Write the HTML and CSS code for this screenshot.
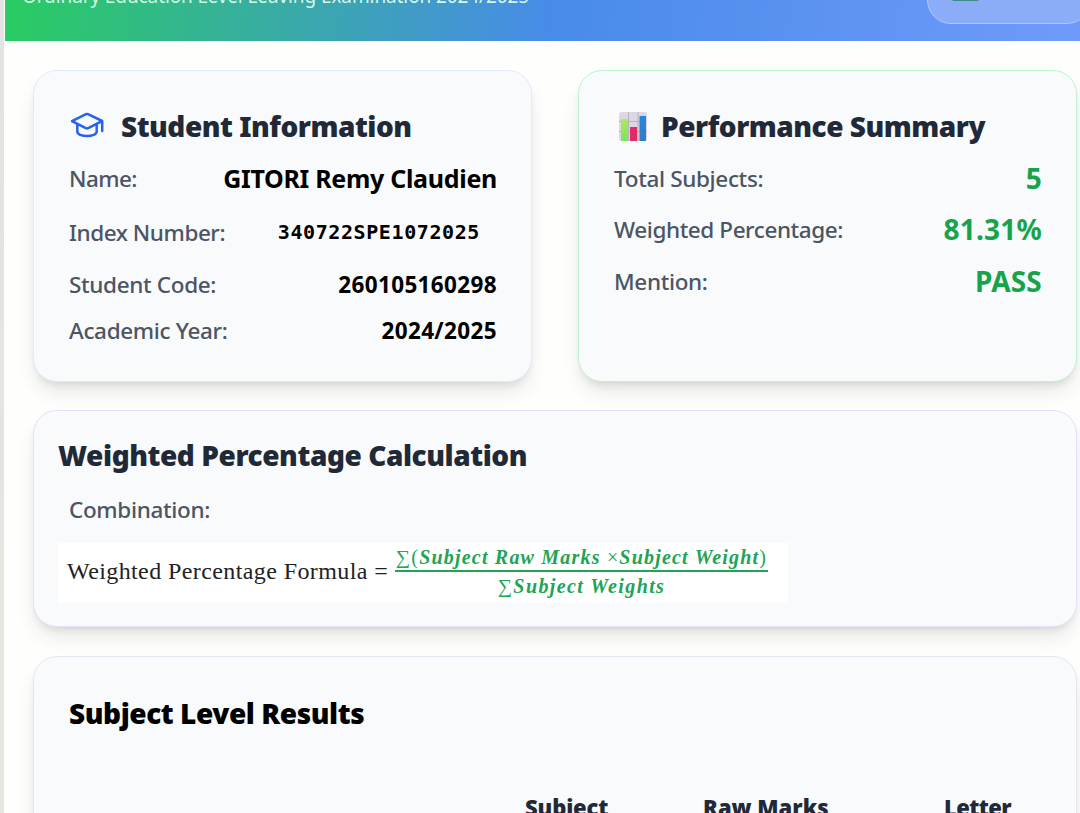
FILE: index.html
```html
<!DOCTYPE html>
<html lang="en">
<head>
<meta charset="utf-8">
<title>Examination Results</title>
<link rel="stylesheet" href="styles.css">
</head>
<body>
<div class="page">
  <header class="banner">
    <p class="subtitle">Ordinary Education Level Leaving Examination 2024/2025</p>
    <div class="chip"><span class="chip-mark"></span></div>
  </header>
  <main class="content">
    <div class="pair">
      <section class="card info">
        <h2 class="heading with-icon">
          <svg class="cap" viewBox="0 0 34 26" fill="none" stroke="#2563eb" stroke-width="2.5" stroke-linecap="round" stroke-linejoin="round"><path d="M2 9.2 16 2.2Q17 1.8 18 2.2L32.2 9V19M2 9.2 15.8 16.2Q17 16.8 18.2 16.2L32 9.2M7.3 12.5V19.5C7.3 25.5 26.7 25.5 26.7 19.5V12.5"/></svg>
          <span>Student Information</span>
        </h2>
        <div class="row r-name"><span class="label l-name">Name:</span><b class="value v-name">GITORI Remy Claudien</b></div>
        <div class="row r-index"><span class="label l-index">Index Number:</span><b class="value mono">340722SPE1072025</b></div>
        <div class="row r-code"><span class="label">Student Code:</span><b class="value v-code">260105160298</b></div>
        <div class="row r-year"><span class="label">Academic Year:</span><b class="value v-year">2024/2025</b></div>
      </section>
      <section class="card summary">
        <h2 class="heading with-icon">
          <svg class="chart" viewBox="0 0 28 29"><defs><linearGradient id="green" x2="0" y2="1"><stop stop-color="#a9ee55"/><stop offset="1" stop-color="#79e45e"/></linearGradient><linearGradient id="blue" x2="0" y2="1"><stop stop-color="#2688e0"/><stop offset="1" stop-color="#347bc0"/></linearGradient></defs><rect width="28" height="29" rx="3" fill="#dcd7e3"/><path d="M0 9.5H28M0 19.5H28M9.5 0V29M19 0V29" stroke="#b4aebd" stroke-width=".9"/><rect x="2" y="7" width="7" height="22" fill="url(#green)"/><rect x="11" y="15" width="7" height="14" fill="#e02b68"/><rect x="20.5" y="4" width="6.5" height="25" fill="url(#blue)"/></svg>
          <span>Performance Summary</span>
        </h2>
        <div class="row r-total"><span class="label">Total Subjects:</span><b class="value score">5</b></div>
        <div class="row r-percent"><span class="label l-percent">Weighted Percentage:</span><b class="value score">81.31%</b></div>
        <div class="row r-mention"><span class="label">Mention:</span><b class="value score">PASS</b></div>
      </section>
    </div>
    <section class="card calc">
      <h2 class="heading">Weighted Percentage Calculation</h2>
      <p class="label combination">Combination:</p>
      <div class="formula">
        <span class="formula-name">Weighted Percentage Formula =</span>
        <span class="fraction">
          <span class="numerator"><i class="sigma">∑(</i>Subject Raw Marks <i class="sigma">×</i>Subject Weight<i class="sigma">)</i></span>
          <span class="denominator"><i class="sigma">∑</i>Subject Weights</span>
        </span>
      </div>
    </section>
    <section class="card results">
      <h2 class="heading t-results">Subject Level Results</h2>
      <div class="columns"><span></span><span class="c-subject">Subject</span><span>Raw Marks</span><span class="c-letter">Letter</span></div>
    </section>
  </main>
</div>
</body>
</html>
```
FILE: styles.css
```css
* { box-sizing: border-box; }
html, body { margin: 0; height: 813px; overflow: hidden; }
body { background: linear-gradient(#e2e3e3, #e7e6dd); font-family: "Noto Sans", "Open Sans", sans-serif; }
.page { width: 1095px; height: 813px; margin-left: 4px; padding-left: 1px; background: #fefffd; overflow: hidden; }
.banner { height: 41px; display: flex; padding-left: 17px; background: linear-gradient(98deg, #29cc61 0%, #488be9 50%, #719bfc 100%); overflow: hidden; }
.subtitle { margin: -18px 0 0; width: 905px; flex: none; font-size: 19px; line-height: 28px; color: #d3f8e5; white-space: nowrap; letter-spacing: -.1px; }
.chip { flex: none; width: 164px; height: 70px; margin-top: -46px; border: 1px solid #adc8fc; border-radius: 24px; background: #8badf8; padding: 40px 0 0 24px; }
.chip-mark { display: block; width: 27px; height: 6px; border-radius: 2px; background: #3f8b87; }
.content { width: 1044px; margin: 29px 0 0 28px; }
.pair { display: flex; justify-content: space-between; margin-bottom: 28px; }
.card { border: 1px solid #e2ebf8; border-radius: 24px; background: #f9fafc; box-shadow: 0 12px 20px -4px rgba(40,40,25,.12), 0 5px 8px -4px rgba(40,40,25,.13); }
.info, .summary { width: 499px; height: 312px; padding: 32px 34px 0 35px; }
.summary { border-color: #bdf2d2; }
.heading { margin: 0; font-size: 28px; font-weight: 900; line-height: 46px; color: #1f2937; white-space: nowrap; letter-spacing: -.43px; }
.with-icon { display: flex; align-items: center; height: 46px; letter-spacing: -.48px; }
.cap { width: 34px; height: 26px; margin: -2px 17px 0 1px; }
.chart { width: 28px; height: 29px; margin: 0 14px 0 5px; }
.row { display: flex; justify-content: space-between; align-items: center; height: 46px; white-space: nowrap; }
.r-name, .r-total { margin-top: 6px; }
.r-index { margin-top: 8px; }
.r-code { margin-top: 6px; }
.r-percent { margin-top: 5px; }
.r-mention { margin-top: 6px; }
.label { font-size: 22.5px; font-weight: 500; color: #4b5563; letter-spacing: -.34px; }
.l-name { letter-spacing: -.55px; }
.l-index { letter-spacing: -.45px; }
.l-percent { letter-spacing: -.42px; }
.value { font-weight: 700; color: #000; }
.v-name { font-size: 25px; letter-spacing: -.3px; }
.v-code, .v-year { font-size: 22.5px; letter-spacing: .36px; }
.mono { font: bold 20px/30px "DejaVu Sans Mono", monospace; letter-spacing: .6px; margin-right: 17px; }
.score { font-size: 28px; color: #16a34a; letter-spacing: .2px; }
.calc { height: 217px; margin-bottom: 29px; padding: 21px 24px; border-color: #e9defb; }
.combination { margin: 0; padding: 9px 0 0 11px; line-height: 46px; }
.formula { width: 730px; height: 60px; margin-top: 10px; padding-left: 9px; display: flex; background: #fff; font-family: "Liberation Serif", serif; white-space: nowrap; }
.formula-name { width: 328px; font-size: 24px; line-height: 57px; color: #222; letter-spacing: .4px; }
.fraction { width: 373px; color: #20a455; font-size: 20px; font-weight: bold; font-style: italic; text-align: center; }
.numerator, .denominator { display: block; height: 29px; line-height: 29px; letter-spacing: 1.2px; }
.denominator { letter-spacing: 1.4px; }
.numerator { border-bottom: 2px solid #20a455; }
.sigma { font-style: normal; font-weight: normal; }
.results { height: 300px; padding: 33px 35px; border-color: #e5e7f0; }
.t-results { color: #000; }
.columns { display: grid; grid-template-columns: 456px 178px 241px 1fr; margin-top: 55px; font-size: 22px; font-weight: 900; line-height: 32px; color: #1f2937; white-space: nowrap; }
.c-subject { letter-spacing: -.15px; }
.c-letter { letter-spacing: -.6px; }
```
